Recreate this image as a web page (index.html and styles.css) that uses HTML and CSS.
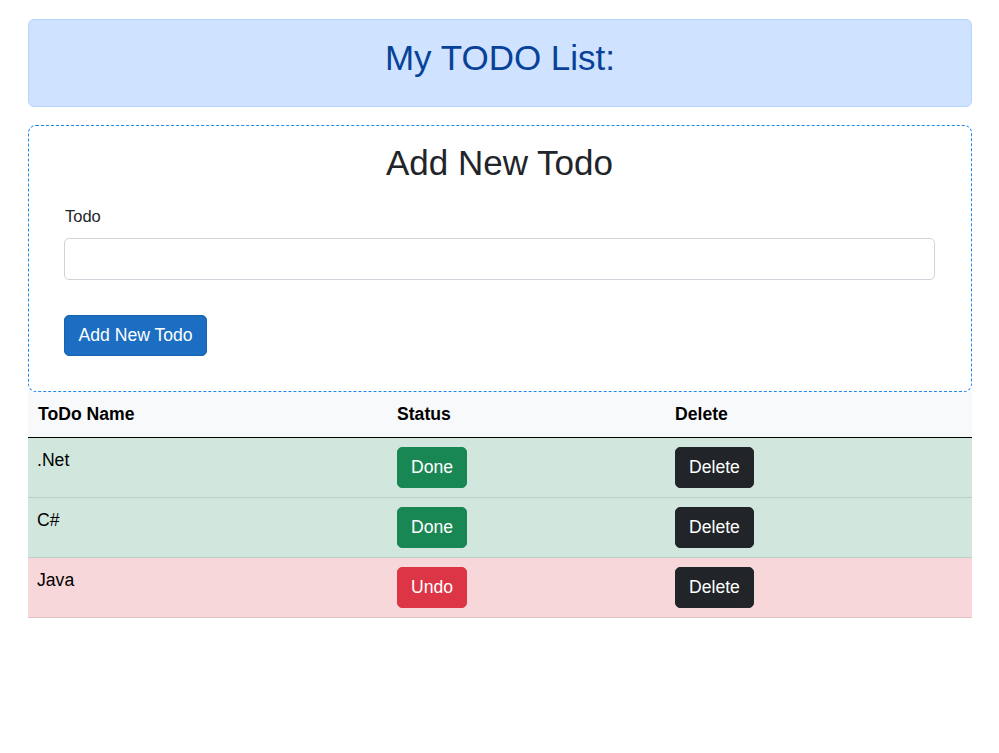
FILE: index.html
```html
<!DOCTYPE html>
<html lang="en">
<head>
<meta charset="utf-8">
<title>My TODO List</title>
<link rel="stylesheet" href="styles.css">
</head>
<body>
<div class="container">
  <div class="banner">
    <h1 class="banner-title">My TODO List:</h1>
  </div>
  <form class="add-box">
    <h2 class="add-title">Add New Todo</h2>
    <label class="field-label" for="todo">Todo</label>
    <input class="field-input" id="todo" type="text">
    <button type="button" class="btn btn-primary">Add New Todo</button>
  </form>
  <table class="todo-table">
    <colgroup>
      <col class="col-name">
      <col class="col-status">
      <col class="col-delete">
    </colgroup>
    <thead>
      <tr><th>ToDo Name</th><th>Status</th><th>Delete</th></tr>
    </thead>
    <tbody>
      <tr class="row-success">
        <td>.Net</td>
        <td><button type="button" class="btn btn-success">Done</button></td>
        <td><button type="button" class="btn btn-dark">Delete</button></td>
      </tr>
      <tr class="row-success">
        <td>C#</td>
        <td><button type="button" class="btn btn-success">Done</button></td>
        <td><button type="button" class="btn btn-dark">Delete</button></td>
      </tr>
      <tr class="row-danger">
        <td>Java</td>
        <td><button type="button" class="btn btn-danger">Undo</button></td>
        <td><button type="button" class="btn btn-dark">Delete</button></td>
      </tr>
    </tbody>
  </table>
</div>
</body>
</html>
```

FILE: styles.css
```css
* { box-sizing: border-box; }
html, body { margin: 0; padding: 0; background: #fff; }
body {
  font-family: "Liberation Sans", Arial, Helvetica, sans-serif;
  font-size: 17.6px;
  line-height: 1.5;
  color: #212529;
}
.container {
  width: 944px;
  margin: 19px 0 0 28px;
}
.banner {
  height: 88px;
  background: #cfe2ff;
  border: 1px solid #b6d4fe;
  border-radius: 6px;
  padding: 17px 0 0 0;
}
.banner-title {
  margin: 0;
  text-align: center;
  font-size: 35px;
  font-weight: 400;
  line-height: 1.2;
  color: #084298;
}
.add-box {
  margin-top: 18px;
  height: 267px;
  border: 1px dashed #1e88f0;
  border-radius: 8px;
  padding: 16px 36px 0 35px;
  display: flex;
  flex-direction: column;
  align-items: flex-start;
}
.add-title {
  align-self: stretch;
  text-align: center;
  margin: 0 0 20px 0;
  font-size: 35px;
  font-weight: 400;
  line-height: 1.2;
  color: #212529;
}
.field-label {
  font-size: 16.5px;
  line-height: 25px;
  margin: 0 0 9px 1px;
}
.field-input {
  align-self: stretch;
  height: 42px;
  border: 1px solid #ced4da;
  border-radius: 5px;
  padding: 6px 13px;
  font: inherit;
  margin: 0 0 35px 0;
}
.btn {
  font-family: inherit;
  font-size: 17.6px;
  line-height: 26.4px;
  height: 41px;
  padding: 0 13px;
  border: 1px solid transparent;
  border-radius: 5px;
  color: #fff;
  cursor: pointer;
}
.btn-primary {
  background: #1b6ec2;
  border-color: #1861ac;
  padding: 0 13.5px;
}
.btn-success { background: #198754; border-color: #198754; }
.btn-danger { background: #dc3545; border-color: #dc3545; }
.btn-dark { background: #212529; border-color: #212529; }
.todo-table {
  width: 944px;
  border-collapse: collapse;
  table-layout: fixed;
  color: #000;
}
.col-name { width: 360px; }
.col-status { width: 278px; }
.col-delete { width: 306px; }
.todo-table th {
  text-align: left;
  font-weight: 700;
  padding: 9px 9px 10px 10px;
  line-height: 26px;
  background: #f8f9fa;
  border-bottom: 1px solid #000;
}
.todo-table th + th { padding-left: 9px; }
.todo-table td {
  padding: 9px 9px 9px 9px;
  line-height: 26px;
  vertical-align: top;
}
.todo-table td .btn { display: block; }
.row-success td { background: #d1e7dd; border-bottom: 1px solid #bcd0c7; }
.row-danger td { background: #f8d7da; border-bottom: 1px solid #dfc2c4; }
```
